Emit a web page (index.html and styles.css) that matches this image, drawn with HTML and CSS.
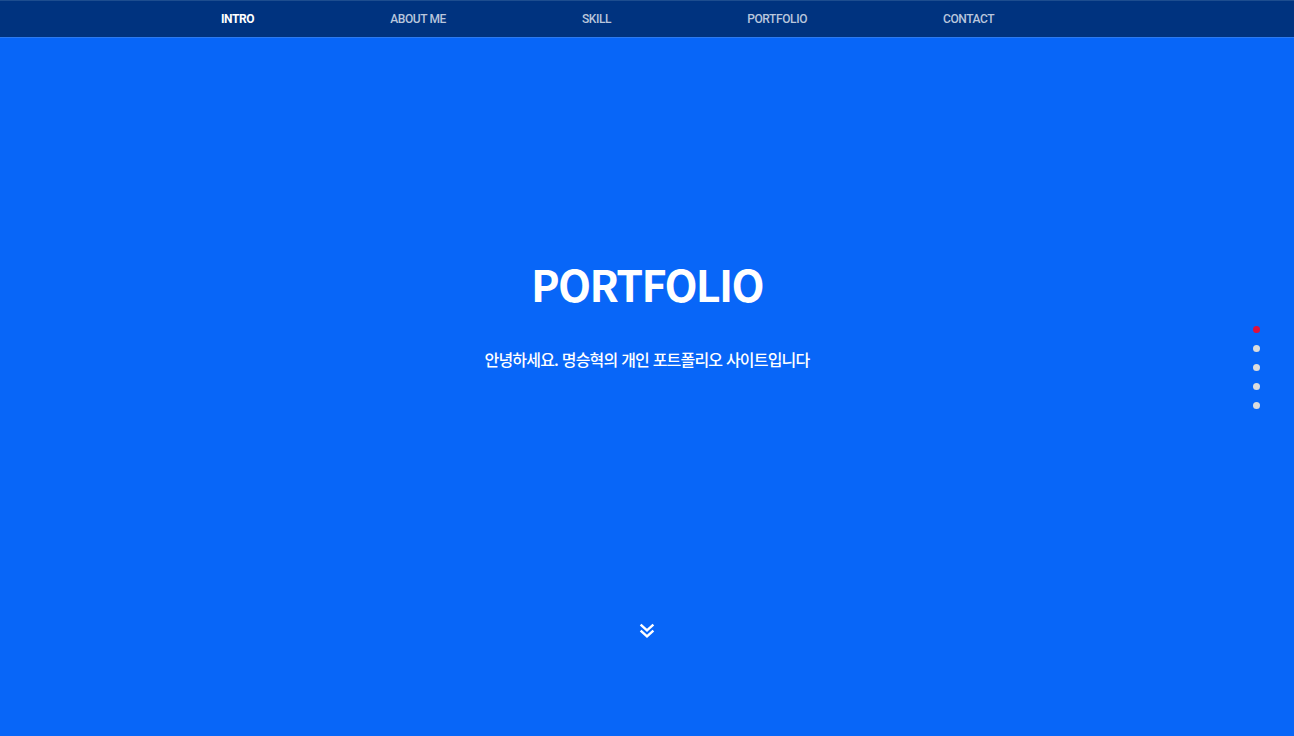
FILE: index.html
```html
<!DOCTYPE html>
<html lang="ko">
<head>
<meta charset="utf-8">
<title>Portfolio</title>
<link rel="stylesheet" href="styles.css">
</head>
<body>
<header class="nav">
  <ul class="menu">
    <li class="active">INTRO</li>
    <li>ABOUT ME</li>
    <li>SKILL</li>
    <li>PORTFOLIO</li>
    <li>CONTACT</li>
  </ul>
</header>
<main class="intro">
  <div class="hero">
    <h1 class="title">PORTFOLIO</h1>
    <p class="sub">안녕하세요. 명승혁의 개인 포트폴리오 사이트입니다</p>
  </div>
  <div class="down">
    <svg width="16" height="16" viewBox="0 0 16 16" fill="none" stroke="#fff" stroke-width="2.4" stroke-linecap="square">
      <polyline points="2.5,2.5 8,7.5 13.5,2.5"/>
      <polyline points="2.5,8.5 8,13.5 13.5,8.5"/>
    </svg>
  </div>
  <ul class="dots">
    <li class="on"></li>
    <li></li>
    <li></li>
    <li></li>
    <li></li>
  </ul>
</main>
</body>
</html>
```
FILE: styles.css
```css
* { box-sizing: border-box; }
html, body { margin: 0; padding: 0; }
body {
  width: 1294px;
  height: 736px;
  overflow: hidden;
  background: #0866f8;
  font-family: Roboto, "Noto Sans", sans-serif;
}
.nav {
  height: 38px;
  background: #00337f;
  border-top: 1px solid #1d4d8f;
  border-bottom: 1px solid #2c7af0;
}
.menu {
  list-style: none;
  margin: 0;
  padding: 0 0 0 221px;
  display: flex;
  gap: 136px;
  height: 36px;
  align-items: center;
}
.menu li {
  color: #b9c6dc;
  font-size: 12px;
  font-weight: 500;
  letter-spacing: -0.4px;
}
.menu li.active {
  color: #ffffff;
  font-weight: 700;
}
.intro {
  position: relative;
  height: 698px;
  display: flex;
  flex-direction: column;
  align-items: center;
}
.hero {
  display: flex;
  flex-direction: column;
  align-items: center;
  padding-top: 215px;
}
.title {
  margin: 0;
  color: #fff;
  font-family: "Noto Sans CJK KR", "Noto Sans", sans-serif;
  font-size: 43px;
  font-weight: 700;
  letter-spacing: -1.7px;
  line-height: 60px;
}
.sub {
  margin: 34px 0 0;
  color: #fff;
  font-family: "Noto Sans CJK KR", "Noto Sans", sans-serif;
  font-size: 16px;
  font-weight: 500;
  letter-spacing: -0.8px;
  line-height: 24px;
}
.down {
  margin-top: 252px;
  width: 16px;
  height: 16px;
}
.down svg { display: block; }
.dots {
  position: absolute;
  right: 34px;
  top: 288px;
  list-style: none;
  margin: 0;
  padding: 0;
  display: flex;
  flex-direction: column;
  gap: 12px;
}
.dots li {
  width: 7px;
  height: 7px;
  border-radius: 50%;
  background: #dcdcdc;
}
.dots li.on { background: #e0103c; }
```
